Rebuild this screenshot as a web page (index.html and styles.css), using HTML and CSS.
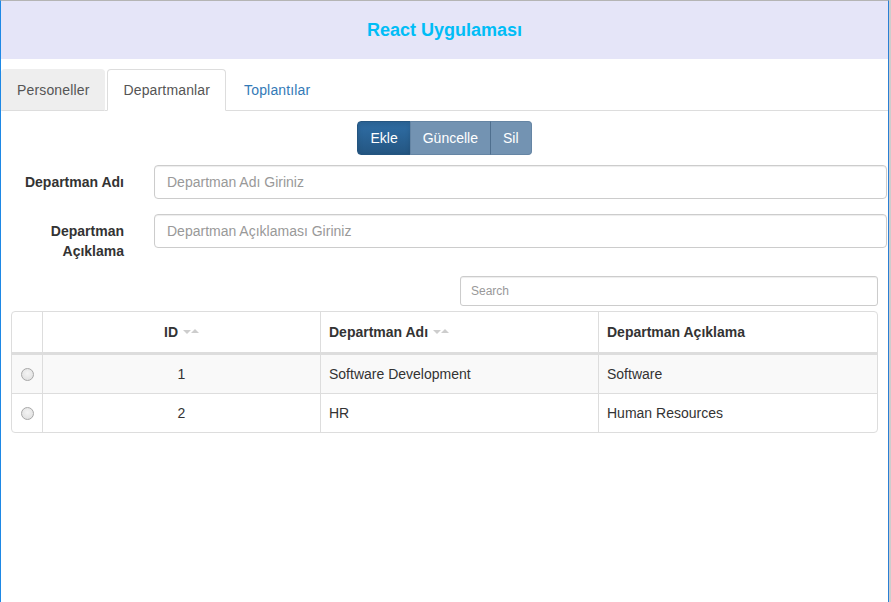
FILE: index.html
```html
<!DOCTYPE html>
<html lang="tr">
<head>
<meta charset="utf-8">
<title>React Uygulaması</title>
<link rel="stylesheet" href="styles.css">
</head>
<body>
<div class="frame">
  <header class="app-header">
    <h1 class="app-title">React Uygulaması</h1>
  </header>

  <ul class="tabs">
    <li class="tab tab-hover"><a href="#">Personeller</a></li>
    <li class="tab tab-active"><a href="#">Departmanlar</a></li>
    <li class="tab"><a href="#">Toplantılar</a></li>
  </ul>

  <div class="toolbar">
    <div class="btn-group">
      <button type="button" class="btn btn-active">Ekle</button>
      <button type="button" class="btn btn-muted">Güncelle</button>
      <button type="button" class="btn btn-muted">Sil</button>
    </div>
  </div>

  <form class="dept-form">
    <div class="form-row">
      <label class="form-label" for="ad">Departman Adı</label>
      <input class="form-input" id="ad" type="text" placeholder="Departman Adı Giriniz">
    </div>
    <div class="form-row">
      <label class="form-label" for="aciklama">Departman Açıklama</label>
      <input class="form-input" id="aciklama" type="text" placeholder="Departman Açıklaması Giriniz">
    </div>
  </form>

  <div class="search-row">
    <input class="search-input" type="text" placeholder="Search">
  </div>

  <div class="data-table">
    <div class="tr thead">
      <div class="cell sel"></div>
      <div class="cell center">ID<span class="order"><span class="caret down"></span><span class="caret up"></span></span></div>
      <div class="cell">Departman Adı<span class="order"><span class="caret down"></span><span class="caret up"></span></span></div>
      <div class="cell last">Departman Açıklama</div>
    </div>
    <div class="tr row striped">
      <div class="cell sel"><span class="radio"></span></div>
      <div class="cell center">1</div>
      <div class="cell">Software Development</div>
      <div class="cell last">Software</div>
    </div>
    <div class="tr row">
      <div class="cell sel"><span class="radio"></span></div>
      <div class="cell center">2</div>
      <div class="cell">HR</div>
      <div class="cell last">Human Resources</div>
    </div>
  </div>
</div>
</body>
</html>
```

FILE: styles.css
```css
* { box-sizing: border-box; }

html, body {
  margin: 0;
  padding: 0;
}

body {
  background: #cdcdcd;
  font-family: "Liberation Sans", Arial, sans-serif;
  font-size: 14px;
  line-height: 20px;
  color: #333;
}

.frame {
  width: 889px;
  height: 602px;
  background: #fff;
  border-top: 1px solid #b4b4b4;
  border-left: 1px solid #1e88e5;
  border-right: 1px solid #2a7fd4;
}

.app-header {
  height: 58px;
  background: #e5e5f8;
  display: flex;
  align-items: center;
  justify-content: center;
}

.app-title {
  margin: 0;
  font-size: 18px;
  line-height: 20px;
  font-weight: bold;
  color: #00bdf6;
}

/* tabs */
.tabs {
  list-style: none;
  margin: 10px 0 0;
  padding: 0;
  display: flex;
  border-bottom: 1px solid #ddd;
}

.tab {
  margin-right: 2px;
  margin-bottom: -1px;
}

.tab a {
  display: block;
  padding: 10px 15px;
  line-height: 20px;
  letter-spacing: 0.15px;
  border: 1px solid transparent;
  border-radius: 4px 4px 0 0;
  text-decoration: none;
  color: #337ab7;
}

.tab-hover a {
  background: #eee;
  border-color: #eee #eee #ddd;
  color: #555;
}

.tab-active a {
  background: #fff;
  border-color: #ddd #ddd transparent;
  color: #555;
}

/* buttons */
.toolbar {
  margin-top: 10px;
  display: flex;
  justify-content: center;
}

.btn-group {
  display: flex;
}

.btn {
  font-family: inherit;
  font-size: 14px;
  line-height: 20px;
  padding: 6px 12px;
  color: #fff;
  border: 1px solid #5b7d9c;
  margin: 0;
  cursor: pointer;
}

.btn + .btn { margin-left: -1px; }

.btn-active {
  background: linear-gradient(#2f6ea6, #245682);
  border-color: #245580;
  border-radius: 4px 0 0 4px;
  box-shadow: inset 0 3px 5px rgba(0,0,0,.125);
}

.btn-muted {
  background: #7393b2;
  border-color: #6585a4;
}

.btn-muted + .btn-muted {
  border-left-color: #4f6f8e;
}

.btn-group .btn:last-child {
  border-radius: 0 4px 4px 0;
}

/* form */
.dept-form {
  margin: 10px 0 0;
}

.form-row {
  display: flex;
  align-items: flex-start;
  margin-bottom: 15px;
}

.form-label {
  width: 123px;
  padding: 7px 0 0 15px;
  text-align: right;
  font-weight: bold;
  line-height: 20px;
}

.form-input {
  margin-left: 30px;
  width: 733px;
  height: 34px;
  padding: 6px 12px;
  font-family: inherit;
  font-size: 14px;
  color: #555;
  border: 1px solid #ccc;
  border-radius: 4px;
  box-shadow: inset 0 1px 1px rgba(0,0,0,.075);
}

.form-input::placeholder,
.search-input::placeholder {
  color: #999;
}

/* search */
.search-row {
  display: flex;
  justify-content: flex-end;
  width: 877px;
}

.search-input {
  width: 418px;
  height: 30px;
  padding: 5px 10px;
  font-family: inherit;
  font-size: 12px;
  border: 1px solid #ccc;
  border-radius: 3px;
  box-shadow: inset 0 1px 1px rgba(0,0,0,.075);
}

/* table */
.data-table {
  margin: 5px 0 0 10px;
  width: 867px;
  border: 1px solid #ddd;
  border-radius: 4px;
  overflow: hidden;
}

.tr {
  display: grid;
  grid-template-columns: 31px 278px 278px 1fr;
}

.thead {
  height: 42px;
  border-bottom: 2px solid #ddd;
  font-weight: bold;
}

.row {
  height: 39px;
  border-top: 1px solid #ddd;
}

.striped { background: #f9f9f9; }

.cell {
  border-right: 1px solid #ddd;
  padding: 0 8px 1px;
  display: flex;
  align-items: center;
  white-space: nowrap;
}

.cell.last { border-right: 0; }

.cell.center { justify-content: center; }

.cell.sel {
  padding: 0;
  justify-content: center;
}

.order {
  display: inline-flex;
  align-items: center;
  margin-left: 5px;
}

.caret {
  display: inline-block;
  width: 0;
  height: 0;
  border-left: 4px solid transparent;
  border-right: 4px solid transparent;
}

.caret.down {
  border-top: 4px solid #cdcdcd;
}

.caret.up {
  border-bottom: 4px solid #cdcdcd;
  margin-top: -1px;
}

.radio {
  display: inline-block;
  width: 13px;
  height: 13px;
  border-radius: 50%;
  border: 1px solid #a8a8a8;
  background: radial-gradient(circle at 50% 40%, #f4f4f4, #dcdcdc);
}
```
